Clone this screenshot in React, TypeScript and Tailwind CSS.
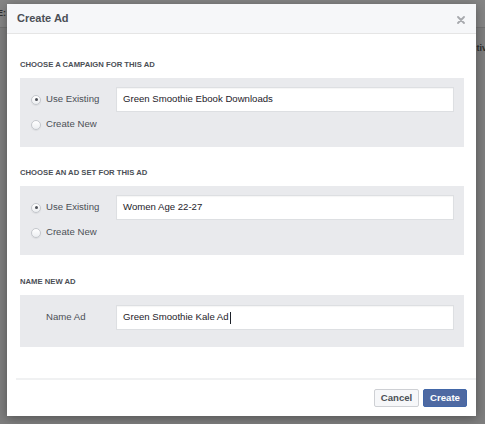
const Radio = ({ checked, label }: { checked?: boolean; label: string }) => (
  <label className="flex h-[25px] items-center gap-[5px] text-[9.6px] text-[#4b4f56]">
    <span className="flex h-[10px] w-[10px] items-center justify-center rounded-full border border-[#c4c7cc] bg-gradient-to-b from-white to-[#eceef1] shadow-[0_1px_1px_rgba(0,0,0,0.06)]">
      {checked && <span className="h-[3px] w-[3px] rounded-full bg-[#4b4f56]" />}
    </span>
    {label}
  </label>
);

const TextBox = ({ value, caret }: { value: string; caret?: boolean }) => (
  <div className="flex h-[25px] flex-1 items-center border border-[#dddfe2] bg-white pl-[6px] text-[9.6px] text-[#1d2129] shadow-[inset_0_1px_1px_rgba(0,0,0,0.04)]">
    {value}
    {caret && <span className="ml-[1px] inline-block h-[12px] w-px bg-[#1d2129]" />}
  </div>
);

const SectionLabel = ({ children }: { children: string }) => (
  <h3 className="mb-[8px] pl-[13px] text-[7.7px] font-bold uppercase leading-[10px] text-[#4b4f56]">{children}</h3>
);

const ChooseBox = ({ value }: { value: string }) => (
  <div className="mx-[13px] mr-[12px] flex bg-[#e9eaed] pb-[10px] pl-[11px] pr-[10px] pt-[9px]">
    <div className="flex w-[85px] flex-col">
      <Radio checked label="Use Existing" />
      <Radio label="Create New" />
    </div>
    <TextBox value={value} />
  </div>
);

export default function App() {
  return (
    <div className="relative h-[424px] w-[485px] overflow-hidden bg-[#7e7e7e] font-['Liberation_Sans',Arial,sans-serif]">
      {/* page behind the overlay */}
      <div className="flex h-[28px] items-center border-b border-[#727272] bg-[#858585] pl-[0px] text-[9px] font-bold text-[#2e2e2e]">
        <span className="-ml-[3px]">E:</span>
      </div>
      <div className="flex justify-end pr-0 pt-[14px] text-[9px] font-bold text-[#2e2e2e]">
        <span className="-mr-[2px]">tiv</span>
      </div>

      {/* dialog */}
      <div className="absolute left-[7px] top-[4px] flex w-[469px] flex-col bg-white shadow-[0_2px_10px_rgba(0,0,0,0.35)]">
        <div className="flex h-[30px] items-center justify-between border-b border-[#e5e5e5] bg-[#f6f7f9] pl-[10px] pr-[10px]">
          <span className="text-[11px] font-bold text-[#4b4f56]">Create Ad</span>
          <svg width="8" height="8" viewBox="0 0 8 8" className="mr-[1px] mt-[2px]">
            <path d="M1 1 L7 7 M7 1 L1 7" stroke="#a7a9ad" strokeWidth="1.8" strokeLinecap="round" />
          </svg>
        </div>

        <div className="pt-[26px]">
          <SectionLabel>Choose a campaign for this ad</SectionLabel>
          <ChooseBox value="Green Smoothie Ebook Downloads" />

          <div className="mt-[21px]">
            <SectionLabel>Choose an ad set for this ad</SectionLabel>
            <ChooseBox value="Women Age 22-27" />
          </div>

          <div className="mt-[22px]">
            <SectionLabel>Name new ad</SectionLabel>
            <div className="mx-[13px] mr-[12px] flex items-center bg-[#e9eaed] pb-[17px] pl-[26px] pr-[10px] pt-[10px]">
              <span className="w-[70px] text-[9.6px] text-[#4b4f56]">Name Ad</span>
              <TextBox value="Green Smoothie Kale Ad" caret />
            </div>
          </div>
        </div>

        <div className="ml-[9px] mt-[31px] h-[2px] bg-[#f0f1f2]" />

        <div className="flex justify-end gap-[4px] pb-[9px] pr-[9px] pt-[9px]">
          <button className="h-[18px] w-[45px] rounded-[2px] border border-[#ced0d4] bg-[#f6f7f9] text-[9.6px] font-bold text-[#4b4f56]">
            Cancel
          </button>
          <button className="h-[18px] w-[44px] rounded-[2px] border border-[#4267a8] bg-[#4e69a2] text-[9.6px] font-bold text-white">
            Create
          </button>
        </div>
      </div>
    </div>
  );
}
